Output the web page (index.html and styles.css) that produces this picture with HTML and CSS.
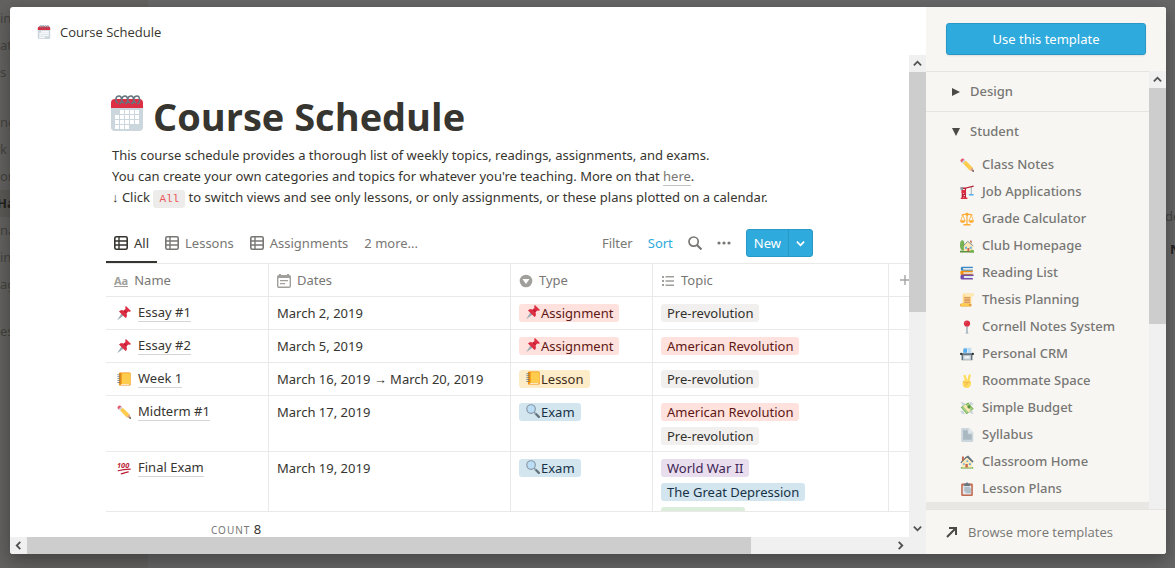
FILE: index.html
```html
<!DOCTYPE html>
<html lang="en">

<head>
    <meta charset="UTF-8">
    <meta name="viewport" content="width=device-width, initial-scale=1.0">
    <title>Course Schedule</title>
    <link rel="stylesheet" href="styles.css">
</head>

<body>

    <!-- icon sprite -->
    <svg class="sprite" aria-hidden="true">
        <symbol id="calendar" viewBox="0 0 36 36">
            <path fill="#ccd6dd" d="M2 12h32v20a4 4 0 0 1-4 4H6a4 4 0 0 1-4-4z" />
            <path fill="#dd2e44" d="M6 4h24a4 4 0 0 1 4 4v5H2V8a4 4 0 0 1 4-4z" />
            <path fill="#fff" d="M11 15h4v4h-4zM16 15h4v4h-4zM21 15h4v4h-4zM26 15h4v4h-4zM6 20h4v4H6zM11 20h4v4h-4zM16 20h4v4h-4zM21 20h4v4h-4zM26 20h4v4h-4zM6 25h4v4H6zM11 25h4v4h-4zM16 25h4v4h-4zM21 25h4v4h-4zM26 25h4v4h-4zM6 30h4v4H6zM11 30h4v4h-4zM16 30h4v4h-4z" />
            <path fill="none" stroke="#66757f" stroke-width="1.5" d="M9 8c-4-2-2-7 1-7 3 0 4 7 0 8M15 8c-4-2-2-7 1-7 3 0 4 7 0 8M21 8c-4-2-2-7 1-7 3 0 4 7 0 8M27 8c-4-2-2-7 1-7 3 0 4 7 0 8" />
        </symbol>
        <symbol id="pin" viewBox="0 0 36 36">
            <path fill="#99aab5" d="M12 18l6 6L3 35l-2 1 1-2z" />
            <path fill="#be1931" d="M8 13c4-2 7-1 10 0l4 5c3 4 3 7 1 11z" />
            <path fill="#dd2e44" d="M5 14c4-4 9-4 12-2l5-5c-1-3-1-5 1-7l13 13c-2 2-4 2-7 1l-5 5c2 4 2 9-2 12z" />
            <path fill="#be1931" d="M17 12l7 7 2-2-7-7z" />
        </symbol>
        <symbol id="ledger" viewBox="0 0 36 36">
            <path fill="#f4900c" d="M8 1h24a3 3 0 0 1 3 3v28a3 3 0 0 1-3 3H8a3 3 0 0 1-3-3V4a3 3 0 0 1 3-3z" />
            <path fill="#fff" d="M10 31h22v2H10z" />
            <path fill="#ffcc4d" d="M12 3h20a2 2 0 0 1 2 2v24a2 2 0 0 1-2 2H12z" />
            <path stroke="#66757f" stroke-width="2" d="M1 7h8M1 12h8M1 17h8M1 22h8M1 27h8" />
        </symbol>
        <symbol id="pencil" viewBox="0 0 36 36">
            <path fill="#ea596e" d="M2 9C-1 6 5-1 9 2l3 3-7 7z" />
            <path fill="#ccd6dd" d="M4 11l7-7 4 4-7 7z" />
            <path fill="#ffcc4d" d="M8 14l7-7 17 17-7 8z" />
            <path fill="#ffe8b6" d="M25 31l7-7 4 11z" />
            <path fill="#d99e82" d="M25 31l3-3 4-4 3 8-3 2z" />
            <path fill="#292f33" d="M31 34l3-4 2 6z" />
        </symbol>
        <symbol id="hundred" viewBox="0 0 36 36">
            <text x="0" y="18" class="hundred-num">100</text>
            <path fill="none" stroke="#bb1a34" stroke-width="3" stroke-linecap="round" d="M3 25c10-3 20-4 31-4M11 33c6-2 12-4 18-5" />
        </symbol>
        <symbol id="magnifier" viewBox="0 0 36 36">
            <path stroke="#66757f" stroke-width="6" stroke-linecap="round" d="M25 25l8 8" />
            <path stroke="#99aab5" stroke-width="4" d="M20 20l5 5" />
            <circle cx="13" cy="13" r="11" fill="#bbddf5" stroke="#8899a6" stroke-width="3" />
        </symbol>
        <symbol id="crane" viewBox="0 0 36 36">
            <path fill="none" stroke="#be1931" stroke-width="3" d="M6 34V9h8v25M6 14l8 7-8 6 8 6M10 9L35 3M2 8h15" />
            <path fill="#dd2e44" d="M4 13h11v8H4zM2 32h17v4H2z" />
            <path stroke="#66757f" stroke-width="1.5" d="M29 5v18" />
            <path fill="#55acee" d="M23 23h12v4H23z" />
            <path fill="#8899a6" d="M1 6h7v6H1z" />
        </symbol>
        <symbol id="scales" viewBox="0 0 36 36">
            <path fill="none" stroke="#ffac33" stroke-width="3" d="M18 2v30M4 8c8-3 20-3 28 0" />
            <circle cx="18" cy="6" r="4" fill="#ffac33" />
            <path fill="none" stroke="#ffac33" stroke-width="2" d="M7 8L2 22M7 8l6 14M29 8l-6 14M29 8l5 14" />
            <path fill="#ffac33" d="M0 21h14c0 9-14 9-14 0zM22 21h14c0 9-14 9-14 0zM9 31h18v4H9z" />
        </symbol>
        <symbol id="garden" viewBox="0 0 36 36">
            <path fill="#5c913b" d="M0 30h36v5H0z" />
            <path fill="#77b255" d="M1 8c2-7 10-6 10 2s4 17-3 20C-1 29-1 16 1 8z" />
            <path fill="#ffe8b6" d="M10 17L21 6l12 11v14H10z" />
            <path fill="none" stroke="#66757f" stroke-width="2" d="M8 18L20 6l14 12" />
            <path fill="#55acee" d="M13 20h5v5h-5zM25 20h5v5h-5z" />
            <path fill="#c1694f" d="M19 23h5v9h-5zM26 4h4v8l-4-4z" />
            <path fill="#77b255" d="M26 31c2-4 7-4 10-1v5H26z" />
        </symbol>
        <symbol id="books" viewBox="0 0 36 36">
            <path fill="#3b88c3" d="M5 2h28v3H9v4h24v3H5c-4 0-4-10 0-10z" />
            <path fill="#e1e8ed" d="M8 5h25v4H8zM9 16h24v4H9zM6 26h26v4H6z" />
            <path fill="#f4900c" d="M3 12h30v4H9v4h24v3H4c-4 0-4-10-1-11z" />
            <path fill="#744eaa" d="M5 22h30v4H10v5h23v4H4c-4 0-4-13 1-13z" />
        </symbol>
        <symbol id="scroll" viewBox="0 0 36 36">
            <path fill="#ffd983" d="M10 1h23a3 3 0 0 1 0 7h-4v19H7V5z" />
            <path fill="#ffe8b6" d="M8 1a4 4 0 0 1 0 8h22a4 4 0 0 0 3-8z" />
            <path fill="#e39f3d" d="M4 27h22a4 4 0 0 1 0 8H4a4 4 0 0 1 0-8z" />
            <path fill="#ffcc4d" d="M4 27h19a5 5 0 0 0 2 7H4a4 4 0 0 1 0-7z" />
            <path stroke="#c1694f" stroke-width="1.7" d="M11 12h15M11 16h15M11 20h15M11 24h15" />
        </symbol>
        <symbol id="roundpin" viewBox="0 0 36 36">
            <ellipse cx="18" cy="34" rx="5" ry="2" fill="#ccd6dd" />
            <path stroke="#8899a6" stroke-width="3" d="M18 14v20" />
            <circle cx="18" cy="9" r="8" fill="#dd2e44" />
            <circle cx="15" cy="6" r="2" fill="#ea596e" />
        </symbol>
        <symbol id="cards" viewBox="0 0 36 36">
            <path fill="#e1e8ed" d="M10 1h20v21H7z" />
            <path fill="#55acee" d="M9 4h9v11H8z" />
            <path fill="#bbddf5" d="M20 3h8v14h-8z" />
            <path fill="#66757f" d="M4 16h28v18H4z" />
            <path fill="#ccd6dd" d="M8 21h20v12H8z" />
            <path fill="#f5f8fa" d="M12 24h12v5H12z" />
            <circle cx="3" cy="18" r="3" fill="#292f33" />
            <circle cx="33" cy="18" r="3" fill="#292f33" />
        </symbol>
        <symbol id="victory" viewBox="0 0 36 36">
            <path stroke="#ffdc5d" stroke-width="6" stroke-linecap="round" d="M12 5l5 17M25 4l-5 18" />
            <path fill="#ffdc5d" d="M8 18c4-3 15-4 19 0 3 6 1 18-9 18S4 27 8 18z" />
            <path fill="none" stroke="#ef9645" stroke-width="1.6" stroke-linecap="round" d="M9 19c2 4 4 6 7 2M17 22l8-1M19 25c-4 1-5 3-5 6" />
        </symbol>
        <symbol id="money" viewBox="0 0 36 36">
            <path fill="#ccd6dd" d="M1 4c7-2 12 0 14 6L6 13c1-4-1-6-5-9zM35 33c-8 0-11-3-13-8l10-2c-1 4 1 6 3 10zM24 2c6 0 9 3 11 7l-8 2zM1 25l8 1 3 9c-6 0-10-4-11-10z" />
            <path fill="#77b255" d="M2 16L21 4l14 16-18 14z" />
            <path fill="#a7d28b" d="M5 17L21 7l11 13-15 11z" />
            <path fill="#ffe8b6" d="M8 13l6-4 14 16-6 4z" />
            <circle cx="23" cy="15" r="4" fill="#5c913b" />
        </symbol>
        <symbol id="page" viewBox="0 0 36 36">
            <path fill="#ccd6dd" d="M6 0h17l11 11v22a3 3 0 0 1-3 3H6a3 3 0 0 1-3-3V3a3 3 0 0 1 3-3z" />
            <path fill="#aab8c2" d="M8 6h12v10h10v14H8z" />
            <path fill="#e1e8ed" d="M22 1v11h11z" />
        </symbol>
        <symbol id="house" viewBox="0 0 36 36">
            <path fill="#77b255" d="M2 31h32v4H2z" />
            <path fill="#66757f" d="M1 19L14 5l7-4 14 16-3 3-13-12L4 21z" />
            <path fill="#ffe8b6" d="M5 19L17 7l14 12v13H5z" />
            <path fill="#c1694f" d="M14 23h6v9h-6zM5 4h5v8l-5 4z" />
            <path fill="#55acee" d="M8 21h4v4H8zM23 21h5v5h-5zM17 14h4v4h-4z" />
        </symbol>
        <symbol id="clipboard" viewBox="0 0 36 36">
            <path fill="#c1694f" d="M6 4h24a3 3 0 0 1 3 3v26a3 3 0 0 1-3 3H6a3 3 0 0 1-3-3V7a3 3 0 0 1 3-3z" />
            <path fill="#e1e8ed" d="M7 9h22v23H7z" />
            <path fill="#b0bec8" d="M11 12h14v4h3v13H15v-4h-4z" />
            <path fill="#66757f" d="M11 4h4a3 3 0 0 1 6 0h4v6H11z" />
        </symbol>
        <symbol id="grid" viewBox="0 0 14 14">
            <rect x="0.8" y="0.8" width="12.4" height="12.4" rx="1.5" fill="none" stroke="currentColor" stroke-width="1.6" />
            <path stroke="currentColor" stroke-width="1.4" d="M1 5h12M1 9h12M5 1v12" />
        </symbol>
        <symbol id="date" viewBox="0 0 14 14">
            <rect x="0.7" y="1.8" width="12.6" height="11.5" rx="1.2" fill="none" stroke="currentColor" stroke-width="1.4" />
            <path fill="currentColor" d="M1 2h12v2H1zM2 0h2v2H2zM10 0h2v2h-2zM3 6h8v1.300H3zM3 9h5v1.300H3z" />
        </symbol>
        <symbol id="select" viewBox="0 0 14 14">
            <circle cx="7" cy="7" r="6.3" fill="currentColor" />
            <path fill="#fff" d="M3.500 5h7L7 10z" />
        </symbol>
        <symbol id="list" viewBox="0 0 14 14">
            <path fill="currentColor" d="M1 2h2v2H1zM4.500 2H13v1.500H4.500zM1 6h2v2H1zM4.500 6.200H13v1.500H4.500zM1 10h2v2H1zM4.500 10.400H13v1.500H4.500z" />
        </symbol>
        <symbol id="search" viewBox="0 0 14 14">
            <circle cx="5.6" cy="5.6" r="4.6" fill="none" stroke="currentColor" stroke-width="1.7" />
            <path stroke="currentColor" stroke-width="2.2" d="M9 9l4.500 4.500" />
        </symbol>
        <symbol id="dots" viewBox="0 0 14 14">
            <circle cx="2" cy="7" r="1.6" fill="currentColor" />
            <circle cx="7" cy="7" r="1.6" fill="currentColor" />
            <circle cx="12" cy="7" r="1.6" fill="currentColor" />
        </symbol>
        <symbol id="chevron" viewBox="0 0 10 10">
            <path fill="none" stroke="currentColor" stroke-width="2" d="M1 3l4 4 4-4" />
        </symbol>
        <symbol id="plus" viewBox="0 0 12 12">
            <path stroke="currentColor" stroke-width="1.4" d="M6 1v10M1 6h10" />
        </symbol>
        <symbol id="arrow" viewBox="0 0 12 12">
            <path fill="none" stroke="currentColor" stroke-width="2" d="M1 11l9-9M3 2h7v7" />
        </symbol>
        <symbol id="triangle" viewBox="0 0 10 10">
            <path fill="currentColor" d="M1 1l8 4-8 4z" />
        </symbol>
    </svg>

    <!-- page behind the dialog -->
    <div class="page">
        <ul class="page-nav">
            <li>in</li>
            <li>at</li>
            <li class="group-end">s &amp;</li>
            <li>ng</li>
            <li>k</li>
            <li>on</li>
            <li class="current">Ha</li>
            <li>na</li>
            <li>in</li>
            <li class="page-end">ag</li>
            <li>es</li>
        </ul>
        <div class="page-side">
            <p>de</p>
            <p class="strong">N</p>
        </div>
    </div>

    <div class="backdrop">
        <div class="dialog" role="dialog" aria-label="Template preview">

            <main class="preview">
                <header class="topbar">
                    <svg class="emoji"><use href="#calendar" /></svg>
                    <span>Course Schedule</span>
                </header>

                <div class="content">
                    <h1><svg class="title-icon"><use href="#calendar" /></svg>Course Schedule</h1>
                    <p>This course schedule provides a thorough list of weekly topics, readings, assignments, and exams.</p>
                    <p>You can create your own categories and topics for whatever you're teaching. More on that <a href="#">here</a>.</p>
                    <p>↓ Click <code>All</code> to switch views and see only lessons, or only assignments, or these plans plotted on a calendar.</p>

                    <div class="toolbar">
                        <div class="tabs">
                            <button class="tab active"><svg class="icon"><use href="#grid" /></svg>All</button>
                            <button class="tab"><svg class="icon"><use href="#grid" /></svg>Lessons</button>
                            <button class="tab"><svg class="icon"><use href="#grid" /></svg>Assignments</button>
                            <button class="tab">2 more...</button>
                        </div>
                        <div class="actions">
                            <button>Filter</button>
                            <button class="sort">Sort</button>
                            <button aria-label="Search"><svg class="icon"><use href="#search" /></svg></button>
                            <button aria-label="More"><svg class="icon"><use href="#dots" /></svg></button>
                            <div class="new">
                                <button>New</button>
                                <button class="new-menu" aria-label="New from template"><svg><use href="#chevron" /></svg></button>
                            </div>
                        </div>
                    </div>

                    <div class="table-wrap">
                        <table>
                            <thead>
                                <tr>
                                    <th class="col-name"><div class="head"><span class="title-type">Aa</span>Name</div></th>
                                    <th class="col-dates"><div class="head"><svg class="icon"><use href="#date" /></svg>Dates</div></th>
                                    <th class="col-type"><div class="head"><svg class="icon"><use href="#select" /></svg>Type</div></th>
                                    <th class="col-topic"><div class="head"><svg class="icon"><use href="#list" /></svg>Topic</div></th>
                                    <th class="col-add"><button aria-label="Add column"><svg><use href="#plus" /></svg></button></th>
                                </tr>
                            </thead>
                            <tbody>
                                <tr>
                                    <td><div class="name"><svg class="emoji"><use href="#pin" /></svg><a href="#">Essay #1</a></div></td>
                                    <td>March 2, 2019</td>
                                    <td><div class="tags"><span class="tag red"><svg class="emoji"><use href="#pin" /></svg>Assignment</span></div></td>
                                    <td><div class="tags"><span class="tag gray">Pre-revolution</span></div></td>
                                    <td></td>
                                </tr>
                                <tr>
                                    <td><div class="name"><svg class="emoji"><use href="#pin" /></svg><a href="#">Essay #2</a></div></td>
                                    <td>March 5, 2019</td>
                                    <td><div class="tags"><span class="tag red"><svg class="emoji"><use href="#pin" /></svg>Assignment</span></div></td>
                                    <td><div class="tags"><span class="tag red">American Revolution</span></div></td>
                                    <td></td>
                                </tr>
                                <tr>
                                    <td><div class="name"><svg class="emoji"><use href="#ledger" /></svg><a href="#">Week 1</a></div></td>
                                    <td>March 16, 2019 → March 20, 2019</td>
                                    <td><div class="tags"><span class="tag yellow"><svg class="emoji"><use href="#ledger" /></svg>Lesson</span></div></td>
                                    <td><div class="tags"><span class="tag gray">Pre-revolution</span></div></td>
                                    <td></td>
                                </tr>
                                <tr>
                                    <td><div class="name"><svg class="emoji"><use href="#pencil" /></svg><a href="#">Midterm #1</a></div></td>
                                    <td>March 17, 2019</td>
                                    <td><div class="tags"><span class="tag blue"><svg class="emoji"><use href="#magnifier" /></svg>Exam</span></div></td>
                                    <td><div class="tags"><span class="tag red">American Revolution</span><span class="tag gray">Pre-revolution</span></div></td>
                                    <td></td>
                                </tr>
                                <tr>
                                    <td><div class="name"><svg class="emoji"><use href="#hundred" /></svg><a href="#">Final Exam</a></div></td>
                                    <td>March 19, 2019</td>
                                    <td><div class="tags"><span class="tag blue"><svg class="emoji"><use href="#magnifier" /></svg>Exam</span></div></td>
                                    <td><div class="tags"><span class="tag purple">World War II</span><span class="tag blue">The Great Depression</span><span class="tag green blank"></span></div></td>
                                    <td></td>
                                </tr>
                            </tbody>
                        </table>
                    </div>
                    <div class="summary"><span class="count">COUNT</span> 8</div>
                </div>

                <div class="scroll-v">
                    <span class="scroll-btn up"><svg><use href="#chevron" /></svg></span>
                    <span class="track"><span class="thumb"></span></span>
                    <span class="scroll-btn"><svg><use href="#chevron" /></svg></span>
                </div>
                <div class="scroll-h">
                    <span class="scroll-btn left"><svg><use href="#chevron" /></svg></span>
                    <span class="track"><span class="thumb"></span></span>
                    <span class="scroll-btn right"><svg><use href="#chevron" /></svg></span>
                </div>
            </main>

            <aside class="picker">
                <div class="picker-top">
                    <button class="use-btn">Use this template</button>
                </div>
                <div class="picker-body">
                    <div class="picker-list">
                        <button class="group"><svg><use href="#triangle" /></svg>Design</button>
                        <button class="group open"><svg><use href="#triangle" /></svg>Student</button>
                        <nav>
                            <a href="#"><svg class="emoji"><use href="#pencil" /></svg>Class Notes</a>
                            <a href="#"><svg class="emoji"><use href="#crane" /></svg>Job Applications</a>
                            <a href="#"><svg class="emoji"><use href="#scales" /></svg>Grade Calculator</a>
                            <a href="#"><svg class="emoji"><use href="#garden" /></svg>Club Homepage</a>
                            <a href="#"><svg class="emoji"><use href="#books" /></svg>Reading List</a>
                            <a href="#"><svg class="emoji"><use href="#scroll" /></svg>Thesis Planning</a>
                            <a href="#"><svg class="emoji"><use href="#roundpin" /></svg>Cornell Notes System</a>
                            <a href="#"><svg class="emoji"><use href="#cards" /></svg>Personal CRM</a>
                            <a href="#"><svg class="emoji"><use href="#victory" /></svg>Roommate Space</a>
                            <a href="#"><svg class="emoji"><use href="#money" /></svg>Simple Budget</a>
                            <a href="#"><svg class="emoji"><use href="#page" /></svg>Syllabus</a>
                            <a href="#"><svg class="emoji"><use href="#house" /></svg>Classroom Home</a>
                            <a href="#"><svg class="emoji"><use href="#clipboard" /></svg>Lesson Plans</a>
                            <a href="#" class="selected" aria-label="Course Schedule"></a>
                        </nav>
                    </div>
                    <div class="scroll-v">
                        <span class="scroll-btn up"><svg><use href="#chevron" /></svg></span>
                        <span class="track"><span class="thumb"></span></span>
                    </div>
                </div>
                <a href="#" class="browse"><svg><use href="#arrow" /></svg>Browse more templates</a>
            </aside>

        </div>
    </div>

</body>

</html>
```

FILE: styles.css
```css
* {
    margin: 0;
    padding: 0;
    box-sizing: border-box;
}

html,
body {
    height: 100%;
    overflow: hidden;
}

body {
    font-family: 'Segoe UI', 'Noto Sans', 'Open Sans', sans-serif;
    font-size: 13px;
    line-height: 21px;
    color: #37352f;
    background: #676767;
}

button {
    font: inherit;
    color: inherit;
    background: none;
    border: none;
    cursor: pointer;
}

a {
    color: inherit;
    text-decoration: none;
}

.sprite {
    position: absolute;
    width: 0;
    height: 0;
}

.emoji,
.icon {
    width: 14px;
    height: 14px;
    flex-shrink: 0;
}

.hundred-num {
    font-size: 19px;
    font-weight: bold;
    font-style: italic;
    fill: #bb1a34;
}

/* page behind */
.page {
    height: 100%;
    display: flex;
    justify-content: space-between;
}

.page-nav {
    width: 148px;
    padding-top: 5px;
    list-style: none;
    line-height: 27px;
    color: #44433f;
    background: #636260;
}

.page-nav .current {
    text-indent: -3px;
    font-weight: bold;
    color: #25231f;
    background: #5b5a57;
}

.page-nav .group-end {
    margin-bottom: 23px;
}

.page-nav .page-end {
    margin-bottom: 20px;
}

.page-side {
    width: 10px;
    padding-top: 200px;
    line-height: 33px;
    color: #454545;
}

.page-side .strong {
    padding-left: 5px;
    font-weight: bold;
    color: #222;
}

/* dialog */
.backdrop {
    position: absolute;
    inset: 0;
    padding: 7px 9px 14px 10px;
    display: flex;
}

.dialog {
    flex: 1;
    display: flex;
    min-width: 0;
    background: #fff;
    border-radius: 3px;
    overflow: hidden;
    box-shadow: 0 5px 12px rgba(15, 15, 15, 0.2), 0 9px 24px rgba(15, 15, 15, 0.2);
}

.preview {
    flex: 1;
    min-width: 0;
    display: grid;
    grid-template-columns: minmax(0, 1fr) 17px;
    grid-template-rows: 48px minmax(0, 1fr) 17px;
}

.topbar {
    grid-column: 1 / 3;
    display: flex;
    align-items: center;
    gap: 9px;
    padding: 2px 27px 0;
    font-family: 'Segoe UI', 'Open Sans', sans-serif;
}

.content {
    padding: 36px 96px 0;
    overflow: hidden;
    display: flex;
    flex-direction: column;
}

h1 {
    display: flex;
    align-items: center;
    gap: 8px;
    margin: 0 0 4px 3px;
    font-family: 'Segoe UI', 'Open Sans', sans-serif;
    font-size: 38px;
    line-height: 50px;
}

.title-icon {
    width: 36px;
    height: 36px;
    margin-bottom: 6px;
}

.content p {
    padding-left: 6px;
    white-space: nowrap;
}

.content p a {
    color: #787774;
    border-bottom: 1px solid #c4c3c1;
}

code {
    padding: 3px 6px;
    font-family: 'Liberation Mono', monospace;
    font-size: 11px;
    line-height: 11px;
    color: #eb5757;
    background: #edecea;
    border-radius: 3px;
}

/* view tabs */
.toolbar {
    height: 38px;
    margin-top: 17px;
    flex-shrink: 0;
    display: flex;
    justify-content: space-between;
}

.tabs,
.actions {
    display: flex;
    align-items: center;
    color: #787774;
    white-space: nowrap;
}

.tab {
    height: 38px;
    padding: 0 8px;
    display: flex;
    align-items: center;
    gap: 6px;
    border-bottom: 2px solid transparent;
}

.tab.active {
    color: #37352f;
    border-bottom-color: #37352f;
}

.actions {
    height: 36px;
    gap: 15px;
}

.actions svg {
    display: block;
}

.sort {
    color: #2eaadc;
}

.new {
    height: 28px;
    display: flex;
    color: #fff;
    background: #2eaadc;
    border: 1px solid #2898c6;
    border-radius: 3px;
}

.new button {
    padding: 0 7px;
}

.new .new-menu {
    border-left: 1px solid #2898c6;
}

.new-menu svg {
    width: 9px;
    height: 9px;
}

/* table */
.table-wrap {
    flex: 1;
    min-height: 0;
    margin-right: -96px;
    overflow: hidden;
    border-top: 1px solid #e9e9e7;
}

table {
    width: 848px;
    table-layout: fixed;
    border-collapse: separate;
    border-spacing: 0;
}

th,
td {
    height: 33px;
    padding: 6px 8px 5px;
    text-align: left;
    vertical-align: top;
    border-right: 1px solid #e9e9e7;
    border-bottom: 1px solid #e9e9e7;
}

th {
    font-weight: normal;
    color: #787774;
}

.col-name {
    width: 163px;
}

.col-dates {
    width: 242px;
}

.col-type {
    width: 142px;
}

.col-topic {
    width: 236px;
}

.col-add button {
    display: block;
    padding: 4px 2px;
    color: #a5a4a1;
}

.col-add svg {
    width: 12px;
    height: 12px;
    display: block;
}

.head {
    display: flex;
    align-items: center;
    gap: 6px;
}

.head .icon,
.title-type {
    color: #a09f9c;
}

.title-type {
    font-size: 11px;
    font-weight: bold;
    line-height: 11px;
    border-bottom: 1px solid #a09f9c;
}

.name {
    display: flex;
    align-items: center;
    gap: 7px;
    padding-left: 3px;
}

.name a {
    line-height: 18px;
    border-bottom: 1px solid #d6d5d3;
}

.tags {
    display: flex;
    flex-direction: column;
    align-items: flex-start;
    gap: 6px;
    padding: 1px 0;
}

.tag {
    height: 18px;
    padding: 0 6px;
    display: flex;
    line-height: 19px;
    border-radius: 3px;
    white-space: nowrap;
}

.tag .emoji {
    margin: 1px 1px 0;
}

.red {
    color: #5d1715;
    background: #ffe2dd;
}

.gray {
    color: #32302c;
    background: #f1f0ef;
}

.yellow {
    color: #402c1b;
    background: #fdecc8;
}

.blue {
    color: #183347;
    background: #d3e5ef;
}

.purple {
    color: #412454;
    background: #e8deee;
}

.green {
    background: #dbeddb;
}

.blank {
    width: 84px;
}

.summary {
    height: 26px;
    margin-right: -96px;
    padding: 7px 0 0 105px;
    flex-shrink: 0;
    border-top: 1px solid #e9e9e7;
}

.count {
    font-size: 10px;
    letter-spacing: 1px;
    color: #787774;
}

/* scrollbars */
.scroll-v,
.scroll-h {
    display: flex;
    background: #f0f0f0;
}

.scroll-v {
    width: 17px;
    flex-direction: column;
}

.scroll-h {
    grid-column: 1 / 3;
    padding-right: 17px;
}

.scroll-btn {
    width: 17px;
    height: 17px;
    flex-shrink: 0;
    display: flex;
    align-items: center;
    justify-content: center;
    color: #505050;
}

.scroll-btn svg {
    width: 9px;
    height: 9px;
}

.up svg {
    transform: rotate(180deg);
}

.left svg {
    transform: rotate(90deg);
}

.right svg {
    transform: rotate(-90deg);
}

.track {
    flex: 1;
    display: flex;
}

.thumb {
    background: #cdcdcd;
}

.scroll-v .thumb {
    width: 17px;
    height: 53.5%;
}

.scroll-h .thumb {
    width: 83.7%;
}

.picker .thumb {
    height: 56%;
}

/* template picker */
.picker {
    width: 240px;
    flex-shrink: 0;
    display: flex;
    flex-direction: column;
    background: #f7f6f3;
    color: #787774;
}

.picker-top {
    padding: 16px 20px;
}

.use-btn {
    width: 100%;
    height: 32px;
    color: #fff;
    background: #2eaadc;
    border: 1px solid #2898c6;
    border-radius: 3px;
    box-shadow: 0 1px 2px rgba(15, 15, 15, 0.1);
}

.picker-body {
    flex: 1;
    min-height: 0;
    display: flex;
}

.picker-list {
    flex: 1;
    overflow: hidden;
    font-weight: 500;
}

.group {
    width: 100%;
    height: 40px;
    padding-left: 25px;
    display: flex;
    align-items: center;
    gap: 9px;
    border-top: 1px solid #e5e4e1;
    font-weight: 500;
}

.group svg {
    width: 10px;
    height: 10px;
    color: #4b4a46;
}

.open svg {
    transform: rotate(90deg);
}

.picker nav a {
    height: 27px;
    padding-left: 34px;
    display: flex;
    align-items: center;
    gap: 8px;
}

.picker nav .selected {
    background: #e8e7e4;
}

.browse {
    height: 45px;
    padding-left: 20px;
    flex-shrink: 0;
    display: flex;
    align-items: center;
    gap: 10px;
    border-top: 1px solid #e5e4e1;
    font-family: 'Segoe UI', 'Open Sans', sans-serif;
}

.browse svg {
    width: 12px;
    height: 12px;
    color: #4b4a46;
}
```
